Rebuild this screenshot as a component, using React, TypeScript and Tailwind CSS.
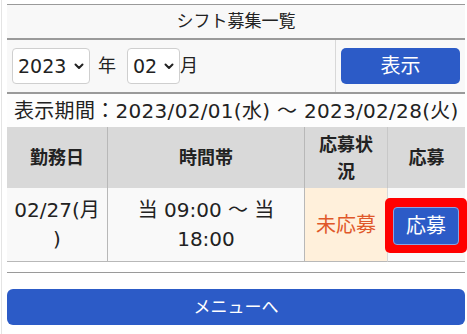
import React from "react";

const Chevron = () => (
  <svg width="10" height="7" viewBox="0 0 10 7" className="shrink-0">
    <path d="M1.5 1.5 L5 5 L8.5 1.5" fill="none" stroke="#222" strokeWidth="2" strokeLinecap="round" strokeLinejoin="round" />
  </svg>
);

export default function App() {
  const font = { fontFamily: '"DejaVu Sans", "Noto Sans CJK JP", sans-serif' };
  return (
    <div className="w-[467px] h-[334px] bg-white overflow-hidden text-[#222]" style={font}>
      <div className="ml-[1px] border-l border-[#e4e4e4] h-full pl-[5px] pr-[2px] pt-[4px]">
        {/* Title */}
        <div className="border-t border-[#9a9a9a] bg-[#f8f8f8] h-[34px] flex items-center justify-center text-[17px] leading-none">
          シフト募集一覧
        </div>
        <div className="h-[2px] bg-[#9a9a9a]" />
        {/* Form row */}
        <div className="flex h-[52px] bg-[#f8f8f8]">
          <div className="w-[329px] border-r border-[#d8d8d8] flex items-center pl-[5px]">
            <div className="w-[78px] h-[36px] rounded-[4px] border border-[#cfcfcf] bg-white flex items-center justify-between pl-[5px] pr-[5px] text-[19px] leading-none">
              <span>2023</span>
              <Chevron />
            </div>
            <span className="ml-[8px] mr-[11px] text-[18px] leading-none">年</span>
            <div className="w-[53px] h-[36px] rounded-[4px] border border-[#cfcfcf] bg-white flex items-center justify-between pl-[5px] pr-[5px] text-[19px] leading-none">
              <span>02</span>
              <Chevron />
            </div>
            <span className="text-[18px] leading-none">月</span>
          </div>
          <div className="flex-1 flex items-center pl-[5px] pr-[5px]">
            <div className="w-[119px] h-[36px] rounded-[5px] bg-[#2c5bc7] text-white flex items-center justify-center text-[20px] leading-none">
              表示
            </div>
          </div>
        </div>
        <div className="h-[2px] bg-[#9a9a9a]" />
        {/* Period */}
        <div className="h-[33px] flex items-center pl-[7px] text-[20px] tracking-[0.3px] leading-none whitespace-nowrap bg-[#fdfdfd]">
          表示期間：2023/02/01(水) ～ 2023/02/28(火)
        </div>
        {/* Table */}
        <div className="grid grid-cols-[101px_197px_83px_1fr]">
          <div className="h-[61px] bg-[#d9d9d9] border-r border-[#b8b8b8] flex items-center justify-center font-bold text-[18px]">勤務日</div>
          <div className="h-[61px] bg-[#d9d9d9] border-r border-[#b8b8b8] flex items-center justify-center font-bold text-[18px]">時間帯</div>
          <div className="h-[61px] bg-[#d9d9d9] border-r border-[#c8c8c8] flex items-center justify-center font-bold text-[18px] leading-[27px] text-center px-[8px]">応募状況</div>
          <div className="h-[61px] bg-[#d9d9d9] flex items-center justify-center font-bold text-[18px]">応募</div>

          <div className="h-[74px] bg-[#f9f9f9] border-r border-b border-[#b8b8b8] flex items-center justify-center text-center text-[20px] leading-[29px] px-[4px]">
            <span>
              02/27(月
              <br />)
            </span>
          </div>
          <div className="h-[74px] bg-[#f9f9f9] border-r border-b border-[#b8b8b8] flex items-center justify-center text-center text-[20px] leading-[29px] px-[22px]">当 09:00 ～ 当 18:00</div>
          <div className="h-[74px] bg-[#fff0db] border-r border-b border-[#d8d8d8] border-b-[#b8b8b8] flex items-center justify-center text-[20px] text-[#e0582a]">未応募</div>
          <div className="relative h-[74px] bg-[#f9f9f9] border-b border-[#b8b8b8]">
            <div className="absolute left-[-3px] right-[-2px] top-[10px] h-[55px] rounded-[5px] bg-[#f00] flex items-center justify-center">
              <div className="w-[66px] h-[38px] rounded-[4px] bg-[#2c5bc7] border border-[#8aa4e0] text-white flex items-center justify-center text-[20px] leading-none">
                応募
              </div>
            </div>
          </div>
        </div>
        <div className="h-[10px]" />
        <div className="h-[1px] bg-[#9a9a9a]" />
        <div className="h-[16px]" />
        <div className="h-[36px] rounded-[6px] bg-[#2c5bc7] text-white flex items-center justify-center text-[17px] leading-none">
          メニューへ
        </div>
      </div>
    </div>
  );
}
